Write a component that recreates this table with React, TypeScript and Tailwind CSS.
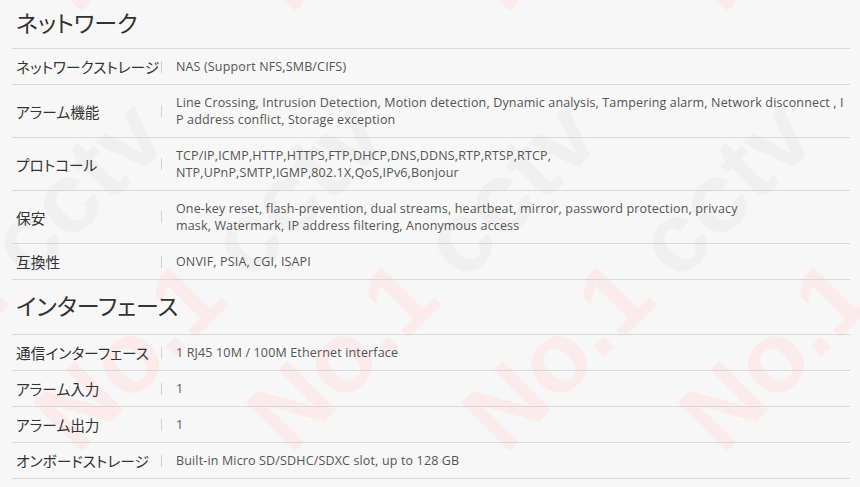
import React from 'react'

type Row = { label: string; lines: string[] }
type Section = { title: string; rows: Row[] }

const sections: Section[] = [
    {
        title: 'ネットワーク',
        rows: [
            { label: 'ネットワークストレージ', lines: ['NAS (Support NFS,SMB/CIFS)'] },
            {
                label: 'アラーム機能',
                lines: [
                    'Line Crossing, Intrusion Detection, Motion detection, Dynamic analysis, Tampering alarm, Network disconnect , I',
                    'P address conflict, Storage exception',
                ],
            },
            {
                label: 'プロトコール',
                lines: ['TCP/IP,ICMP,HTTP,HTTPS,FTP,DHCP,DNS,DDNS,RTP,RTSP,RTCP,', 'NTP,UPnP,SMTP,IGMP,802.1X,QoS,IPv6,Bonjour'],
            },
            {
                label: '保安',
                lines: [
                    'One-key reset, flash-prevention, dual streams, heartbeat, mirror, password protection, privacy',
                    'mask, Watermark, IP address filtering, Anonymous access',
                ],
            },
            { label: '互換性', lines: ['ONVIF, PSIA, CGI, ISAPI'] },
        ],
    },
    {
        title: 'インターフェース',
        rows: [
            { label: '通信インターフェース', lines: ['1 RJ45 10M / 100M Ethernet interface'] },
            { label: 'アラーム入力', lines: ['1'] },
            { label: 'アラーム出力', lines: ['1'] },
            { label: 'オンボードストレージ', lines: ['Built-in Micro SD/SDHC/SDXC slot, up to 128 GB'] },
        ],
    },
]

// Watermark anchor points (centre of the "N")
const marks: { x: number; y: number }[] = []
for (const y of [-35, 405]) {
    for (const x of [-143, 77, 290, 505, 722]) marks.push({ x, y })
}

function Watermark() {
    return (
        <div className="pointer-events-none absolute inset-0 select-none" aria-hidden="true">
            {marks.map((m, i) => (
                <div
                    key={i}
                    className="absolute origin-top-left -rotate-45 whitespace-nowrap font-['Liberation_Sans',Arial,sans-serif] text-[100px] font-bold leading-[100px]"
                    style={{ left: m.x - 60, top: m.y - 9 }}
                >
                    <span className="text-[#fbebeb]">No.1</span>
                    <span className="text-[#f0f0f0]"> cctv</span>
                </div>
            ))}
        </div>
    )
}

function SpecRow({ row }: { row: Row }) {
    return (
        <div className="flex items-center border-b border-[#d9d9d9] py-[9px] pl-[4px]">
            <div className="w-[145px] shrink-0 whitespace-nowrap font-['Noto_Sans_CJK_JP',sans-serif] text-[14.7px] leading-[17px] text-[#333] [font-feature-settings:'palt']">
                {row.label}
            </div>
            <span className="h-[12px] w-px shrink-0 bg-[#d2d2d2]" />
            <div className="ml-[14px] font-['Open_Sans','Noto_Sans_CJK_JP',sans-serif] text-[12.5px] leading-[17px] tracking-[0.15px] text-[#555]">
                {row.lines.map((line, i) => (
                    <div key={i} className="whitespace-nowrap">{line}</div>
                ))}
            </div>
        </div>
    )
}

export default function App() {
    return (
        <div className="relative min-h-screen overflow-hidden bg-[#f7f7f7]">
            <Watermark />

            <div className="relative pl-[12px] pr-[10px]">
                {sections.map((section, si) => (
                    <div key={section.title}>
                        {/* Section heading */}
                        <h2
                            className={
                                si === 0
                                    ? "border-b border-[#d9d9d9] pt-[6px] pb-[9px] pl-[4px] font-['Noto_Sans_CJK_JP',sans-serif] text-[23px] font-normal leading-[33px] text-[#333] [font-feature-settings:'palt']"
                                    : "border-b border-[#d9d9d9] pt-[9px] pb-[12px] pl-[4px] font-['Noto_Sans_CJK_JP',sans-serif] text-[23px] font-normal leading-[33px] text-[#333] [font-feature-settings:'palt']"
                            }
                        >
                            {section.title}
                        </h2>
                        {section.rows.map((row) => (
                            <SpecRow key={row.label} row={row} />
                        ))}
                    </div>
                ))}
            </div>
        </div>
    )
}
